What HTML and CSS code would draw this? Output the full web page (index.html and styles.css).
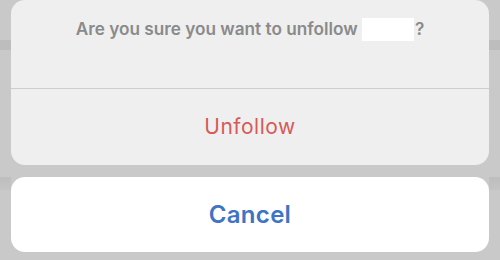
FILE: index.html
```html
<!DOCTYPE html>
<html>
<head>
<meta charset="utf-8">
<link rel="stylesheet" href="styles.css">
</head>
<body>
<div class="sheet">
  <div class="group">
    <div class="message">Are you sure you want to unfollow <span class="redact"></span>?</div>
    <div class="action destructive">Unfollow</div>
  </div>
  <div class="group cancel-group">
    <div class="action cancel">Cancel</div>
  </div>
</div>
</body>
</html>
```
FILE: styles.css
```css
html, body {
  margin: 0;
  padding: 0;
}
body {
  width: 500px;
  height: 260px;
  overflow: hidden;
  background: #c9c9c9;
  font-family: Inter, "Liberation Sans", Arial, sans-serif;
}
.sheet {
  display: flex;
  flex-direction: column;
  gap: 12px;
  padding: 0 11px;
  height: 260px;
  box-sizing: border-box;
  background:
    linear-gradient(#c9c9c9, #c9c9c9) 11px 0 / 478px 260px no-repeat,
    linear-gradient(to bottom, #c9c9c9 0, #c9c9c9 40px, #bdbdbd 40px, #bdbdbd 50px, #c9c9c9 50px, #c9c9c9 177px, #bebebe 177px, #c4c4c4 190px, #c9c9c9 190px);
}
.group {
  background: #efefef;
  border-radius: 14px;
  display: flex;
  flex-direction: column;
  overflow: hidden;
}
.message {
  height: 89px;
  box-sizing: border-box;
  padding-top: 18px;
  text-align: center;
  color: #8a8a8a;
  font-size: 17.2px;
  font-weight: 600;
  border-bottom: 1px solid #cdcdcd;
}
.redact {
  display: inline-block;
  width: 52px;
  height: 23px;
  background: #ffffff;
  vertical-align: -6px;
  margin-right: 1px;
}
.action {
  display: flex;
  align-items: center;
  justify-content: center;
}
.destructive {
  height: 76px;
  color: #d65a58;
  font-size: 21px;
  letter-spacing: 0.5px;
  padding-bottom: 2px;
  box-sizing: border-box;
}
.cancel-group {
  background: #ffffff;
}
.cancel {
  height: 75px;
  color: #3d74c5;
  font-weight: 600;
  font-size: 24px;
  letter-spacing: 0.3px;
}
```
